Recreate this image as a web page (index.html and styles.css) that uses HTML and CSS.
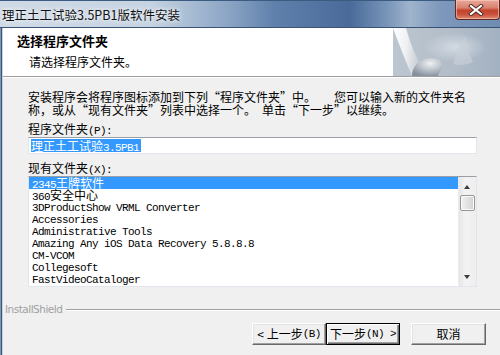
FILE: index.html
```html
<!DOCTYPE html>
<html lang="zh-CN">
<head>
<meta charset="utf-8">
<title>理正土工试验3.5PB1版软件安装</title>
<link rel="stylesheet" href="styles.css">
</head>
<body>
<div class="window">
  <div class="titlebar">
    <div class="title">理正土工试验3.5PB1版软件安装</div>
    <div class="close">
      <svg width="16" height="12" viewBox="0 0 16 12">
        <path d="M3 2 L13 10 M13 2 L3 10" stroke="#4a2620" stroke-width="4" stroke-linecap="square"/>
        <path d="M3 2 L13 10 M13 2 L3 10" stroke="#ffffff" stroke-width="2.2" stroke-linecap="square"/>
      </svg>
    </div>
  </div>
  <div class="frame">
    <div class="frame-edge"></div>
    <div class="client">
      <div class="header">
        <div class="header-text">
          <div class="h-title">选择程序文件夹</div>
          <div class="h-sub">请选择程序文件夹。</div>
        </div>
        <svg class="header-art" width="107" height="48" viewBox="0 0 107 48">
          <defs>
            <linearGradient id="bg" x1="0" y1="0" x2="1" y2="0">
              <stop offset="0" stop-color="#bcc6d0"/>
              <stop offset="0.55" stop-color="#b2bdc9"/>
              <stop offset="1" stop-color="#a2b1c1"/>
            </linearGradient>
            <radialGradient id="glow" cx="0.58" cy="0.4" r="0.3">
              <stop offset="0" stop-color="#d3dae2"/>
              <stop offset="1" stop-color="#d3dae2" stop-opacity="0"/>
            </radialGradient>
            <linearGradient id="page" x1="0" y1="0" x2="1" y2="0.2">
              <stop offset="0" stop-color="#ffffff"/>
              <stop offset="0.5" stop-color="#eef0f2"/>
              <stop offset="1" stop-color="#c2c9d1"/>
            </linearGradient>
            <radialGradient id="tube" cx="0.6" cy="0.3" r="0.75">
              <stop offset="0" stop-color="#eef1f4"/>
              <stop offset="0.45" stop-color="#c0c7cf"/>
              <stop offset="1" stop-color="#848f9b"/>
            </radialGradient>
          </defs>
          <rect width="107" height="48" fill="url(#bg)"/>
          <rect width="107" height="48" fill="url(#glow)"/>
          <path d="M60 36 C64 24 68 14 72 8 C74 16 76 26 80 34 C74 37 66 38 60 36 Z" fill="#c7cfd8" opacity="0.7"/>
          <path d="M0 0 L13 0 C17 14 22 28 30 40 L22 48 L19 48 C12 32 6 16 0 0 Z" fill="url(#page)"/>
          <path d="M19 48 C19 38 27 30 39 30 C47 30 51 34 49 40 C47 44 45 46 45 48 Z" fill="url(#tube)"/>
        </svg>
      </div>
      <div class="content">
        <div class="intro">
          <div class="intro-line">安装程序会将程序图标添加到下列<span class="ql">“</span>程序文件夹<span class="qr">”</span>中。　　您可以输入新的文件夹名</div>
          <div class="intro-line">称，或从<span class="ql">“</span>现有文件夹<span class="qr">”</span>列表中选择一个。　单击<span class="ql">“</span>下一步<span class="qr">”</span>以继续。</div>
        </div>
        <div class="label">程序文件夹<span class="lat">(P):</span></div>
        <div class="textbox"><span class="sel">理正土工试验<span class="lat">3.5PB1</span></span></div>
        <div class="label label2">现有文件夹<span class="lat">(X):</span></div>
        <div class="listbox">
          <div class="items">
            <div class="item selected"><span class="lat">2345</span>王牌软件</div>
            <div class="item"><span class="lat">360</span>安全中心</div>
            <div class="item mono">3DProductShow VRML Converter</div>
            <div class="item mono">Accessories</div>
            <div class="item mono">Administrative Tools</div>
            <div class="item mono">Amazing Any iOS Data Recovery 5.8.8.8</div>
            <div class="item mono">CM-VCOM</div>
            <div class="item mono">Collegesoft</div>
            <div class="item mono">FastVideoCataloger</div>
          </div>
          <div class="scrollbar">
            <div class="arrow up"></div>
            <div class="thumb"></div>
            <div class="track"></div>
            <div class="arrow down"></div>
          </div>
        </div>
      </div>
      <div class="brand">
        <span class="brand-name">InstallShield</span>
        <span class="brand-line"></span>
      </div>
      <div class="buttons">
        <div class="btn">&lt; 上一步<span class="lat">(B)</span></div>
        <div class="btn default">下一步<span class="lat">(N) &gt;</span></div>
        <div class="btn cancel">取消</div>
      </div>
    </div>
  </div>
</div>
</body>
</html>
```
FILE: styles.css
```css
html, body {
  margin: 0;
  padding: 0;
}
body {
  width: 500px;
  height: 355px;
  overflow: hidden;
  background: #f0f0f0;
  font-family: "Noto Sans CJK SC", sans-serif;
  font-size: 12px;
  color: #000;
}
.window {
  display: flex;
  flex-direction: column;
  width: 500px;
  height: 355px;
}
.titlebar {
  height: 28px;
  box-sizing: border-box;
  display: flex;
  align-items: flex-start;
  justify-content: space-between;
  border-top: 1px solid #3c5b80;
  border-bottom: 1px solid #3a5275;
  background: linear-gradient(90deg, #cfdae6 0%, #c5d3e2 30%, #8ea7c6 45%, #5f80ab 55%, #4a6b9a 70%, #7c98bb 78%, #9fb4cd 82%, #7d98bb 88%, #6f8cb2 100%);
}
.title {
  padding: 4px 0 0 2px;
  line-height: 20px;
  font-size: 12.5px;
  color: #111;
  text-shadow: 0 0 6px #ffffff, 0 0 3px #eef3f8;
  white-space: nowrap;
}
.close {
  margin-top: -1px;
  width: 45px;
  height: 20px;
  flex: none;
  box-sizing: border-box;
  border: 1px solid #5a2a24;
  border-top: none;
  border-radius: 0 0 4px 4px;
  background: linear-gradient(180deg, #e9a99b 0%, #d9826f 40%, #c5432c 55%, #c8503a 75%, #e08b71 100%);
  box-shadow: inset 0 0 0 1px rgba(255,210,200,0.55);
  display: flex;
  align-items: center;
  justify-content: center;
}
.close svg {
  margin-left: -4px;
}
.frame {
  flex: 1;
  display: flex;
  min-height: 0;
}
.frame-edge {
  width: 3px;
  flex: none;
  background: linear-gradient(90deg, #7d97b8 0px, #7d97b8 1px, #3d5678 1px, #3d5678 2px, #c9d3de 2px);
}
.client {
  flex: 1;
  display: flex;
  flex-direction: column;
}
.header {
  height: 48px;
  flex: none;
  display: flex;
  justify-content: space-between;
  background: #fff;
  border-bottom: 1px solid #a0a0a0;
  box-shadow: 0 1px 0 #ffffff;
}
.header-text {
  padding: 4px 0 0 14px;
}
.h-title {
  font-weight: bold;
  font-size: 13px;
  line-height: 17px;
}
.h-sub {
  margin-top: 4px;
  padding-left: 12px;
  line-height: 18px;
}
.header-art {
  flex: none;
  display: block;
}
.content {
  padding: 13px 23px 0 25px;
}
.intro-line {
  height: 13px;
  line-height: 13px;
  white-space: nowrap;
}
.ql, .qr {
  display: inline-block;
  width: 12px;
  line-height: 0;
}
.ql {
  text-align: right;
}
.qr {
  text-align: left;
}
.lat {
  font-family: "Liberation Mono", monospace;
  font-size: 11px;
  letter-spacing: -0.6px;
  line-height: 0;
}
.label {
  margin-top: 7px;
  height: 12px;
  line-height: 12px;
  white-space: nowrap;
}
.label2 {
  margin-top: 8px;
}
.textbox {
  margin-top: 2px;
  height: 17px;
  box-sizing: border-box;
  border: 1px solid #e2e6ec;
  border-top-color: #9a9ea5;
  background: #fff;
  padding: 1px 0 0 2px;
  line-height: 12px;
}
.sel {
  background: #3399ff;
  color: #fff;
  display: inline-block;
  height: 13px;
  line-height: 13px;
  padding-right: 2px;
}
.listbox {
  margin-top: 2px;
  height: 111px;
  box-sizing: border-box;
  border: 1px solid #e2e6ec;
  border-top-color: #9a9ea5;
  background: #fff;
  display: flex;
}
.items {
  flex: 1;
}
.item {
  height: 12px;
  line-height: 12px;
  padding-left: 3px;
  white-space: nowrap;
}
.item.mono {
  font-family: "Liberation Mono", monospace;
  font-size: 11px;
  letter-spacing: -0.6px;
  height: 11px;
  padding-top: 1px;
}
.item.selected {
  background: #3399ff;
  color: #fff;
}
.scrollbar {
  width: 17px;
  flex: none;
  display: flex;
  flex-direction: column;
  background: linear-gradient(90deg, #e6e6e6, #f3f3f3 40%, #eeeeee);
  border-left: 1px solid #ebebeb;
}
.arrow {
  height: 17px;
  flex: none;
  position: relative;
}
.arrow::after {
  content: "";
  position: absolute;
  left: 5px;
  width: 0;
  height: 0;
  border-left: 3.5px solid transparent;
  border-right: 3.5px solid transparent;
}
.arrow.up::after {
  top: 8px;
  border-bottom: 4px solid #3c3c3c;
}
.arrow.down::after {
  top: 6px;
  border-top: 4px solid #3c3c3c;
}
.thumb {
  height: 16px;
  margin: 1px 1px 0 1px;
  flex: none;
  box-sizing: border-box;
  border: 1px solid #979797;
  border-radius: 2px;
  background: linear-gradient(90deg, #f2f2f2, #e2e2e2 50%, #d2d2d2);
  box-shadow: inset 0 0 0 1px #fafafa;
}
.track {
  flex: 1;
}
.brand {
  margin-top: 16px;
  display: flex;
  align-items: center;
  height: 13px;
}
.brand-name {
  padding-left: 2px;
  font-family: "DejaVu Sans", "Liberation Sans", sans-serif;
  font-size: 10.5px;
  letter-spacing: -0.5px;
  color: #a0a0a0;
  line-height: 13px;
}
.brand-line {
  flex: 1;
  margin-left: 4px;
  height: 1px;
  background: #a0a0a0;
  box-shadow: 0 1px 0 #ffffff;
}
.buttons {
  margin-top: 7px;
  display: flex;
  justify-content: flex-end;
  padding-right: 14px;
}
.btn {
  width: 74px;
  height: 22px;
  box-sizing: border-box;
  border: 1px solid;
  border-color: #ffffff #696969 #696969 #ffffff;
  box-shadow: inset -1px -1px 0 #a0a0a0, inset 1px 1px 0 #e3e3e3;
  background: #f0f0f0;
  display: flex;
  align-items: center;
  justify-content: center;
  line-height: 14px;
  white-space: nowrap;
}
.btn.default {
  border-color: #000;
  box-shadow: inset 1px 1px 0 #ffffff, inset -1px -1px 0 #696969, inset -2px -2px 0 #a0a0a0;
}
.btn.cancel {
  width: 75px;
  margin-left: 11px;
}
```
